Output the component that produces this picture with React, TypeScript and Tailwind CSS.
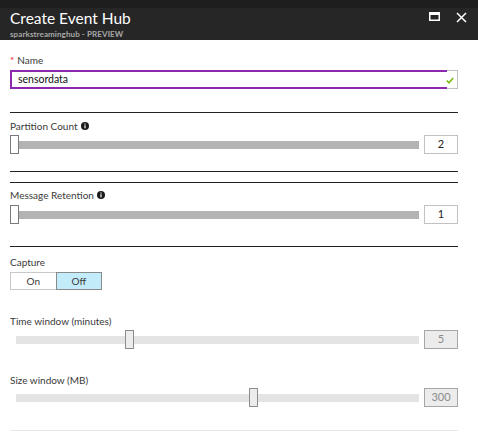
import React from 'react'

const font = { fontFamily: 'Lato, "Open Sans", sans-serif' }

function InfoIcon() {
  return (
    <svg width="8" height="8" viewBox="0 0 8 8" className="inline-block ml-[3px] -mt-[2px]">
      <circle cx="4" cy="4" r="4" fill="#1a1a1a" />
      <rect x="3.4" y="3.3" width="1.2" height="3" fill="#fff" />
      <rect x="3.4" y="1.5" width="1.2" height="1.1" fill="#fff" />
    </svg>
  )
}

function Divider({ className = '' }: { className?: string }) {
  return <div className={`h-px bg-[#222] ${className}`} />
}

function Slider({ pos, value, disabled }: { pos: number; value: string; disabled?: boolean }) {
  return (
    <div className="flex items-center h-[19px]">
      <div className="relative flex-1 h-full flex items-center">
        <div className={`h-[8px] w-full ${disabled ? 'ml-[6px] bg-[#e4e4e4]' : 'ml-[8px] bg-[#b3b3b3]'}`} />
        <div
          className={`absolute top-0 w-[9px] h-[19px] border ${disabled ? 'bg-[#ececec] border-[#8c8c8c]' : 'bg-white border-[#7a7a7a]'}`}
          style={{ left: pos }}
        />
      </div>
      <div
        className={`ml-[5px] w-[34px] h-[19px] border flex items-center justify-center text-[11px] ${
          disabled ? 'bg-[#ececec] border-[#a6a6a6] text-[#8a8a8a]' : 'bg-white border-[#c2c2c2] text-[#222]'
        }`}
      >
        {value}
      </div>
    </div>
  )
}

export default function App() {
  return (
    <div className="w-[478px] h-[434px] bg-white overflow-hidden" style={font}>
      <div className="h-[8px] bg-[#1e1e1e]" />
      <div className="h-[32px] bg-[#262626] px-[10px] flex justify-between">
        <div>
          <div className="text-[15.5px] leading-[19px] text-white mt-[1px]">Create Event Hub</div>
          <div className="text-[8px] leading-[10px] font-bold text-[#a8a8a8] mt-[1px] tracking-[0.1px]">sparkstreaminghub - PREVIEW</div>
        </div>
        <div className="flex items-start gap-[16px] pt-[4px] pr-[1px]">
          <svg width="11" height="9" viewBox="0 0 11 9">
            <rect x="0.75" y="0.75" width="9.5" height="7.5" fill="none" stroke="#fff" strokeWidth="1.5" />
            <rect x="1" y="1" width="9" height="2" fill="#fff" />
          </svg>
          <svg width="11" height="11" viewBox="0 0 11 11">
            <path d="M1 1 L10 10 M10 1 L1 10" stroke="#fff" strokeWidth="1.5" />
          </svg>
        </div>
      </div>

      <div className="pl-[10px] pr-[20px] text-[10px] text-[#3a3a3a]">
        <div className="mt-[13px] leading-[14px]">
          <span className="text-[#e81123] mr-[3px]">*</span>Name
        </div>
        <div className="mt-[3px] flex h-[19px]">
          <div className="flex-1 border-2 border-r-0 border-[#8c28ad] flex items-center pl-[6px] text-[#111] text-[10.5px]">
            sensordata
          </div>
          <div className="w-[11px] border border-l-0 border-[#c2c2c2] flex items-center justify-start">
            <svg width="8" height="7" viewBox="0 0 8 7" className="-ml-[1px] mt-[2px]">
              <path d="M0.8 3.6 L3 5.8 L7.2 1" fill="none" stroke="#7cbb12" strokeWidth="1.6" />
            </svg>
          </div>
        </div>

        <Divider className="mt-[23px]" />

        <div className="mt-[6px] leading-[14px]">
          Partition Count
          <InfoIcon />
        </div>
        <div className="mt-[2px]">
          <Slider pos={0} value="2" />
        </div>

        <Divider className="mt-[17px]" />
        <Divider className="mt-[10px]" />

        <div className="mt-[5px] leading-[14px]">
          Message Retention
          <InfoIcon />
        </div>
        <div className="mt-[3px]">
          <Slider pos={0} value="1" />
        </div>

        <Divider className="mt-[22px]" />

        <div className="mt-[8px] leading-[14px]">Capture</div>
        <div className="mt-[3px] flex h-[18px] w-[92px]">
          <div className="flex-1 border border-r-0 border-[#c8c8c8] flex items-center justify-center">On</div>
          <div className="flex-1 border border-[#8a8a8a] bg-[#c3ecfa] flex items-center justify-center">Off</div>
        </div>

        <div className="mt-[24px] leading-[14px]">Time window (minutes)</div>
        <div className="mt-[2px]">
          <Slider pos={115} value="5" disabled />
        </div>

        <div className="mt-[24px] leading-[14px]">Size window (MB)</div>
        <div className="mt-[1px]">
          <Slider pos={239} value="300" disabled />
        </div>

        <div className="mt-[23px] h-px bg-[#e8e8e8]" />
      </div>
    </div>
  )
}
